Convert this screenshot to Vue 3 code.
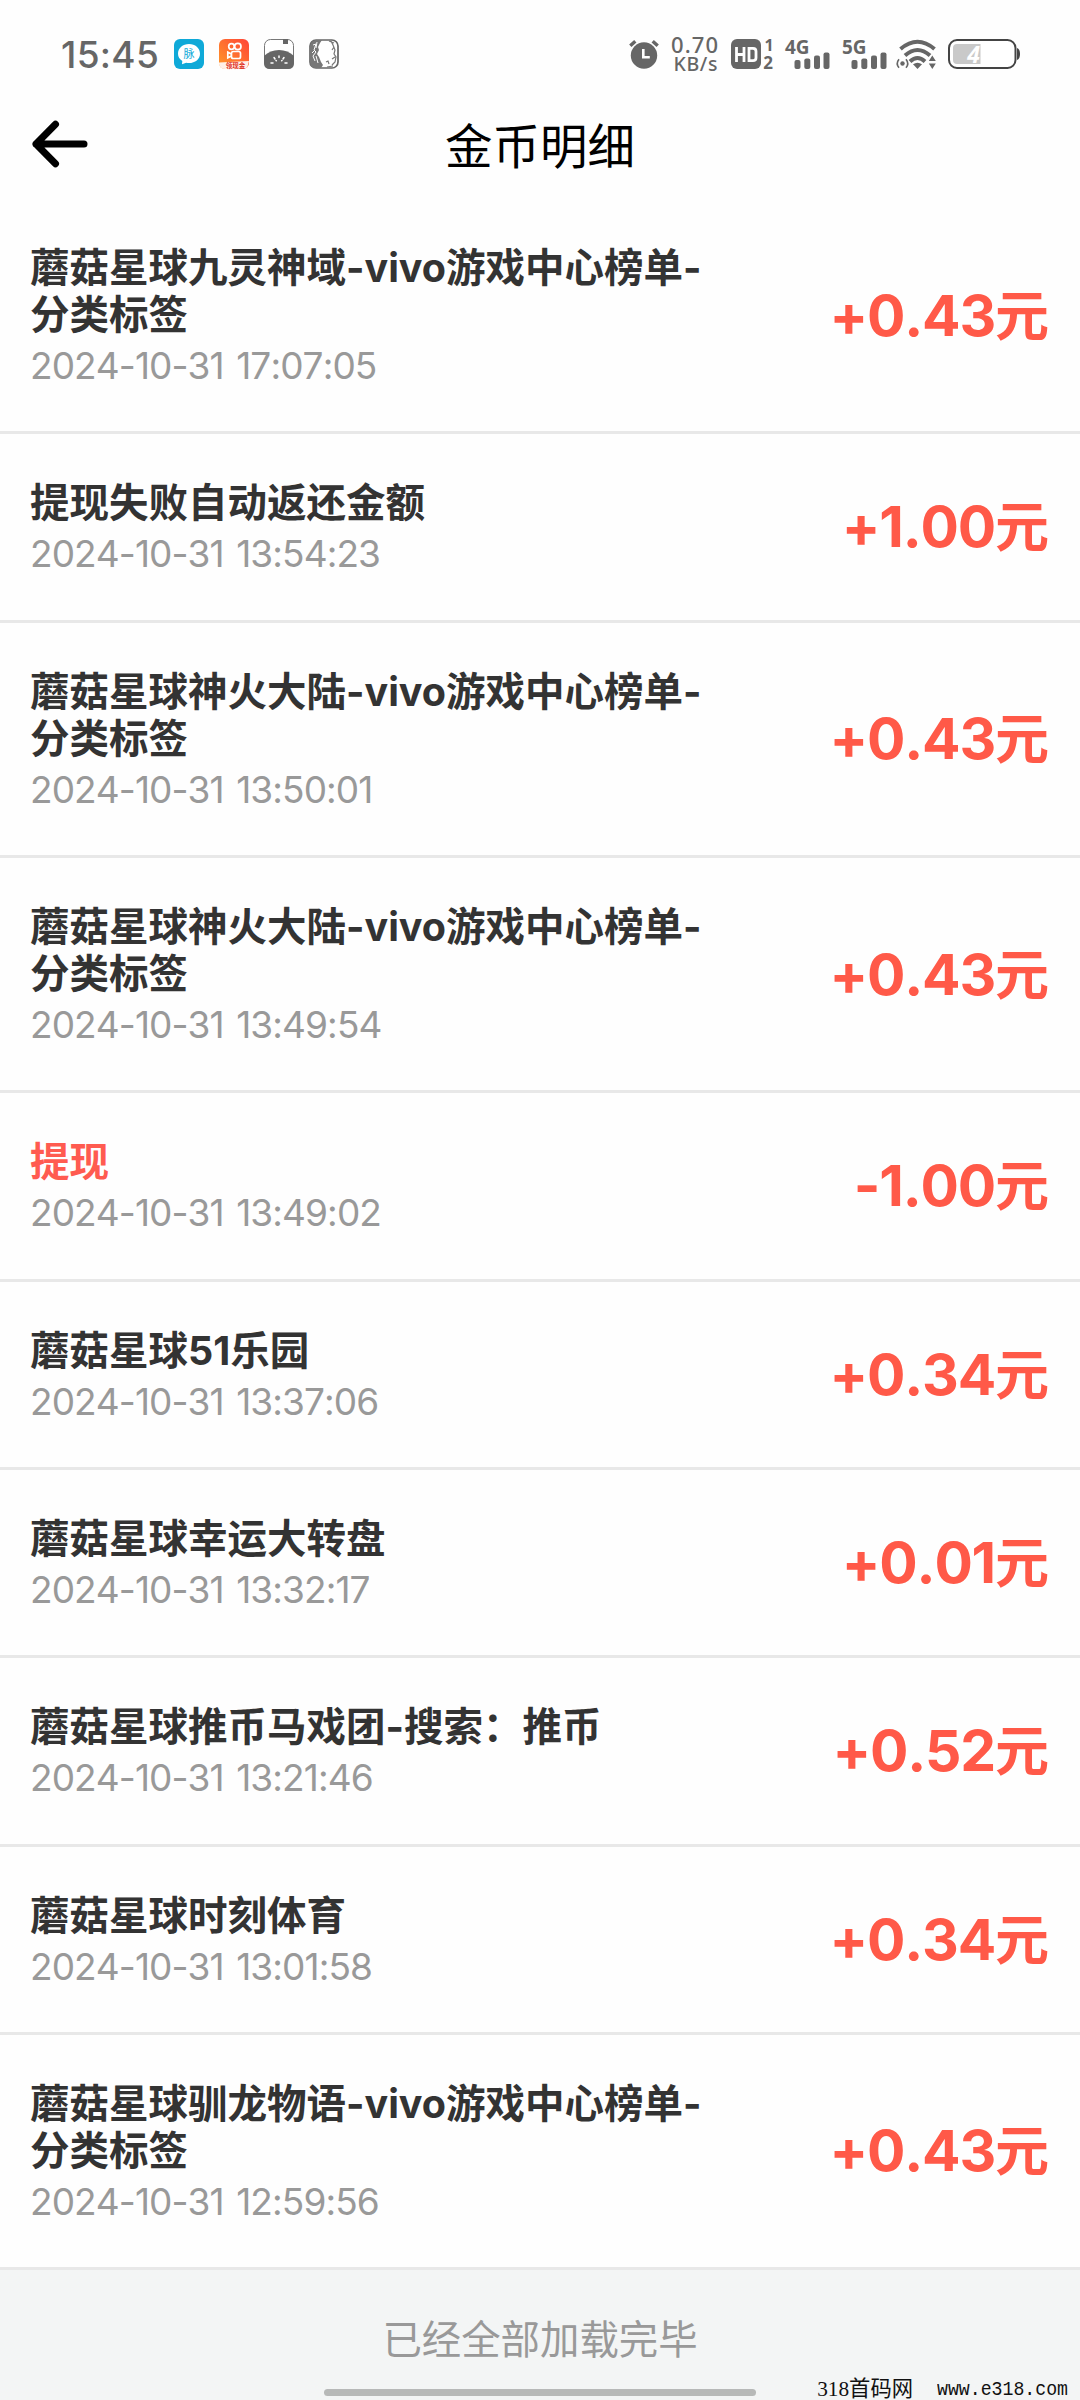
<script setup>
const records = [
  { lines: ['蘑菇星球九灵神域-vivo游戏中心榜单-', '分类标签'], time: '2024-10-31 17:07:05', amount: '+0.43' },
  { lines: ['提现失败自动返还金额'], time: '2024-10-31 13:54:23', amount: '+1.00' },
  { lines: ['蘑菇星球神火大陆-vivo游戏中心榜单-', '分类标签'], time: '2024-10-31 13:50:01', amount: '+0.43' },
  { lines: ['蘑菇星球神火大陆-vivo游戏中心榜单-', '分类标签'], time: '2024-10-31 13:49:54', amount: '+0.43' },
  { lines: ['提现'], time: '2024-10-31 13:49:02', amount: '-1.00', withdraw: true },
  { lines: ['蘑菇星球51乐园'], time: '2024-10-31 13:37:06', amount: '+0.34' },
  { lines: ['蘑菇星球幸运大转盘'], time: '2024-10-31 13:32:17', amount: '+0.01' },
  { lines: ['蘑菇星球推币马戏团-搜索：推币'], time: '2024-10-31 13:21:46', amount: '+0.52' },
  { lines: ['蘑菇星球时刻体育'], time: '2024-10-31 13:01:58', amount: '+0.34' },
  { lines: ['蘑菇星球驯龙物语-vivo游戏中心榜单-', '分类标签'], time: '2024-10-31 12:59:56', amount: '+0.43' },
]
</script>

<template>
  <div class="page">
    <div class="status">
      <span class="clock">15:45</span>
      <div class="apps">
        <svg width="30" height="30" viewBox="0 0 30 30">
          <rect width="30" height="30" rx="6" fill="#0fa9d8" />
          <path d="M15 5c6.200 0 11 4.200 11 9.700S21.200 24 15 24c-1 0-2 0-2.800-.3L8 25.200l.3-3.200C5.700 20.300 4 17.700 4 14.700 4 9.200 8.800 5 15 5z" fill="#fff" />
          <text x="15" y="18.800" font-size="11" text-anchor="middle" fill="#0fa9d8" class="cjk">脉</text>
        </svg>
        <svg width="30" height="30" viewBox="0 0 30 30">
          <defs>
            <linearGradient id="ks" x1="1" y1="0" x2="0" y2="1">
              <stop offset="0" stop-color="#ff4438" />
              <stop offset="1" stop-color="#ff9a28" />
            </linearGradient>
          </defs>
          <rect width="30" height="30" rx="6" fill="url(#ks)" />
          <g fill="none" stroke="#fff" stroke-width="1.700">
            <circle cx="12.500" cy="7.500" r="2.800" />
            <circle cx="18.800" cy="7.500" r="3.200" />
            <rect x="12.500" y="12.500" width="9" height="7" rx="1.800" />
            <path d="M12.300 15L8.800 13.200v5.600l3.500-1.800" />
          </g>
          <path d="M0 23.500L30 22l-1.500 5.500q-1 2.500-5 2.500H6Q1 30 0 25z" fill="#fff0e8" />
          <text x="16.500" y="28.600" font-size="6.500" font-weight="700" text-anchor="middle" fill="#e0321e" class="cjk">领现金</text>
        </svg>
        <svg width="30" height="30" viewBox="0 0 30 30">
          <rect x=".5" y=".5" width="29" height="29" rx="6" fill="#fff" stroke="#777" />
          <path d="M0 17C4 13 9 11 15 11s11 2 15 6v7q0 6-6 6H6q-6 0-6-6z" fill="#666" />
          <path d="M19 0h5v5h-5z" fill="#666" />
          <g stroke="#fff" stroke-width="1.500" stroke-linecap="round">
            <path d="M15 17v1.500M10 18.500l1 1.500M20 18.500l-1 1.500M7 24h2M23 24h-2M12 21.500l.3.300M18 21.500l-.3.300" />
          </g>
        </svg>
        <svg width="30" height="30" viewBox="0 0 30 30">
          <rect x="1" y="1" width="28" height="28" rx="6" fill="#fff" stroke="#666" stroke-width="1.700" />
          <path d="M1 7q1-6 7-6h5l-2 3-2 4 1 3-2 4 2 3 2 5 2 3-2 3H7q-6 0-6-6z" fill="#777" />
          <path d="M4 6l3-1-2 6 2 2-3 4 2 5M8 3L7 9M7 17l2 7M3 14l2-2" stroke="#fff" stroke-width="1" fill="none" />
          <path d="M22 2l2 4 2 5-1 4 2 3-1 5-3 3M20 2l5 2M17 23l2-1 1 3M25 8l-2 3M26 18l-3 2M18 28l6-1" stroke="#777" stroke-width="1.200" fill="none" />
        </svg>
      </div>
      <div class="system">
        <svg class="alarm" width="30" height="30" viewBox="0 0 30 30">
          <circle cx="15" cy="16.500" r="13.200" fill="#666" />
          <path d="M1.300 6.800L6.300 2.200M28.700 6.800L23.700 2.200" stroke="#666" stroke-width="3.400" />
          <path d="M14.300 10v8.300h6.500" fill="none" stroke="#fff" stroke-width="2.600" />
        </svg>
        <svg class="speed" width="48" height="44" viewBox="0 0 48 44">
          <text x="0" y="20.500" font-size="22" font-weight="500" textLength="47" class="num">0.70</text>
          <text x="2.500" y="38.500" font-size="19.500" font-weight="500" textLength="44" class="num">KB/s</text>
        </svg>
        <svg class="hd" width="44" height="32" viewBox="0 0 44 32">
          <rect y="1" width="30" height="30" rx="6" fill="#666" />
          <path d="M5.500 9v15M13 9v15M5.500 16.500H13M18 10.300h4q3 0 3 3v6.400q0 3-3 3h-4z" fill="none" stroke="#fff" stroke-width="2.800" />
          <text x="38" y="13" font-size="16" font-weight="700" text-anchor="middle" class="num">1</text>
          <text x="37" y="31" font-size="17" font-weight="700" text-anchor="middle" class="num">2</text>
        </svg>
        <svg v-for="net in ['4G', '5G']" :key="net" class="net" width="45" height="32" viewBox="0 0 45 32">
          <text x="0" y="15.500" font-size="19.500" font-weight="700" textLength="24.500" lengthAdjust="spacingAndGlyphs" class="num">{{ net }}</text>
          <g fill="#666">
            <rect x="9.500" y="22" width="6" height="9" rx="2" />
            <rect x="19.300" y="20.500" width="6" height="10.500" rx="2" />
            <rect x="29" y="17.500" width="6" height="13.500" rx="2" />
            <rect x="38.500" y="14.500" width="6" height="16.500" rx="2" />
          </g>
        </svg>
        <svg class="wifi" width="41" height="32" viewBox="0 0 41 32">
          <g fill="none" stroke="#666" stroke-width="4">
            <path d="M4.500 11Q21.500-3.500 38.500 11" />
            <path d="M9 17.500Q21.500 6.500 34 17.500" />
            <path d="M14 23.500Q21.500 16.500 29 23.500" />
          </g>
          <path d="M17 26.200q4.500-3 9 0L21.500 31z" fill="#666" />
          <path d="M36.300 17.500l3.500 5.500h-7zM36.300 31l3.500-5.500h-7z" fill="#666" />
          <circle cx="6.500" cy="25.500" r="2.200" fill="#666" />
          <path d="M3 21.200q-3.500 4.300 0 8.600M10 21.200q3.500 4.300 0 8.600" fill="none" stroke="#666" stroke-width="1.600" />
        </svg>
        <svg class="battery" width="73" height="32" viewBox="0 0 73 32">
          <rect x="1" y="2" width="66.500" height="28" rx="8" fill="#fff" stroke="#444" stroke-width="2" />
          <path d="M9 6h23.500v20H9q-4 0-4-4V10q0-4 4-4z" fill="#c9c9c9" />
          <path d="M69 10q3 1 3 6t-3 6z" fill="#444" />
          <text x="25.500" y="25" font-size="23" font-weight="700" text-anchor="middle" class="charge">4</text>
        </svg>
      </div>
    </div>

    <header class="nav">
      <svg class="back" width="58" height="48" viewBox="0 0 58 48">
        <path d="M24.500 4.200L5 24l19.500 19.800M5 24h48" fill="none" stroke="#000" stroke-width="7" stroke-linecap="round" stroke-linejoin="round" />
      </svg>
      <h1>金币明细</h1>
    </header>

    <main>
      <section v-for="(r, i) in records" :key="i" class="row">
        <div class="info">
          <div class="title" :class="{ red: r.withdraw }">
            <div v-for="l in r.lines" :key="l">{{ l }}</div>
          </div>
          <div class="time">{{ r.time }}</div>
        </div>
        <div class="amount">{{ r.amount }}<span class="unit">元</span></div>
      </section>
    </main>

    <footer>
      <p>已经全部加载完毕</p>
      <div class="home"></div>
      <div class="mark"><span>318首码网</span><span class="url">www.e318.com</span></div>
    </footer>
  </div>
</template>

<style>
body { margin: 0; background: #fff; }
</style>

<style scoped>
.page {
  width: 1080px;
  height: 2400px;
  overflow: hidden;
  display: flex;
  flex-direction: column;
  background: #fefefe;
  font-family: Inter, "Noto Sans CJK SC", sans-serif;
}
svg { display: block; flex: none; overflow: visible; }
.cjk { font-family: "Noto Sans CJK SC", sans-serif; }
.num { font-family: "Noto Sans", sans-serif; fill: #666; }
.charge { font-family: "Noto Sans", sans-serif; font-style: italic; fill: #fff; }
.status {
  height: 108px;
  display: flex;
  align-items: center;
  padding-left: 61px;
  padding-right: 59px;
  color: #666;
}
.clock { font-size: 37px; font-weight: 500; width: 113px; letter-spacing: 0.300px; }
.apps { display: flex; gap: 15px; }
.system { display: flex; align-items: center; margin-left: auto; }
.speed { margin-left: 12px; }
.hd { margin-left: 12px; }
.net { margin-left: 10.500px; }
.net + .net { margin-left: 12px; }
.wifi { margin-left: 9px; }
.battery { margin-left: 11px; }
.nav {
  height: 91.200px;
  box-sizing: border-box;
  display: flex;
  align-items: flex-start;
  padding: 0 31px;
}
.back { margin-top: 12px; }
h1 {
  flex: 1;
  margin: -1.500px 58px 0 0;
  text-align: center;
  font: 400 47.500px/74px "Noto Sans CJK SC", sans-serif;
  color: #000;
}
.row {
  display: flex;
  align-items: center;
  justify-content: space-between;
  box-sizing: border-box;
  padding: 46px 31px 40.300px 30px;
  border-bottom: 3px solid #e8e8e8;
}
.title {
  font-size: 39.500px;
  line-height: 47px;
  font-weight: 700;
  color: #333;
  white-space: nowrap;
}
.title.red { color: #ff5b50; }
.time {
  margin-top: 2px;
  font-size: 37px;
  line-height: 50px;
  letter-spacing: -0.900px;
  word-spacing: 3px;
  font-kerning: none;
  font-weight: 400;
  color: #999;
  white-space: nowrap;
}
.amount {
  display: flex;
  align-items: baseline;
  margin-top: -8px;
  font-size: 57px;
  line-height: 60px;
  letter-spacing: -1.200px;
  font-kerning: none;
  font-weight: 700;
  color: #ff5948;
  white-space: nowrap;
}
.unit { font-family: "Noto Sans CJK SC", sans-serif; font-size: 54px; letter-spacing: 0; }
footer {
  flex: 1;
  position: relative;
  background: #f3f5f5;
  display: flex;
  flex-direction: column;
  align-items: center;
}
footer p {
  margin: 37px 0 0;
  font: 400 39.400px/60px "Noto Sans CJK SC", sans-serif;
  color: #999;
}
.home { width: 432px; height: 7px; border-radius: 4px; background: #b7b9b8; margin-top: 21.700px; }
.mark {
  position: absolute;
  right: 12px;
  bottom: -1px;
  display: flex;
  align-items: center;
  gap: 24px;
  font: 21.300px/24px "Liberation Serif", "Noto Sans CJK SC", serif;
  color: #111;
}
.url { font: 18.200px/24px "Liberation Mono", monospace; transform: scaleY(1.15); }
</style>
